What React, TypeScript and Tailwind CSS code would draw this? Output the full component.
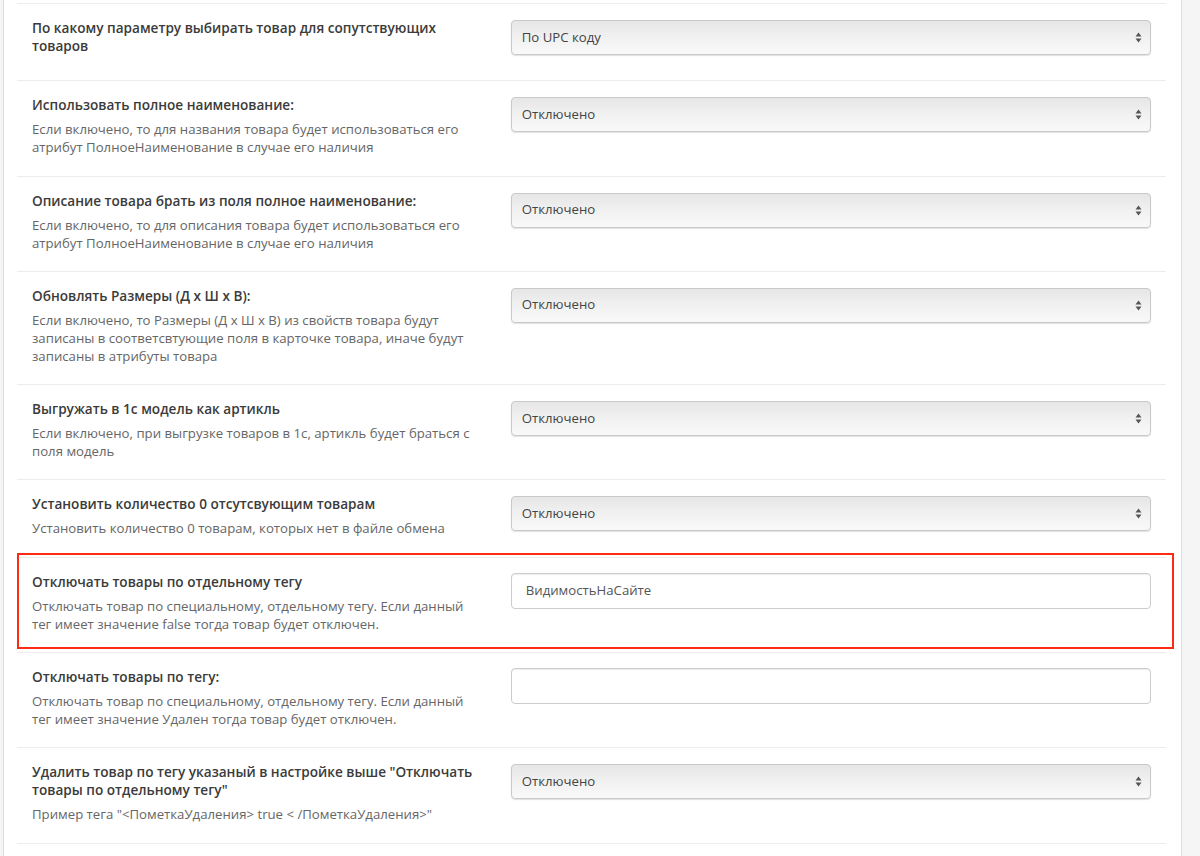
import React from "react";

type Setting = {
  id: string;
  label: string;
  help?: string[];
  kind: "select" | "input";
  value: string;
  marked?: boolean;
};

const settings: Setting[] = [
  {
    id: "related",
    label: "По какому параметру выбирать товар для сопутствующих товаров",
    kind: "select",
    value: "По UPC коду",
  },
  {
    id: "fullname",
    label: "Использовать полное наименование:",
    help: ["Если включено, то для названия товара будет использоваться его атрибут ПолноеНаименование в случае его наличия"],
    kind: "select",
    value: "Отключено",
  },
  {
    id: "description",
    label: "Описание товара брать из поля полное наименование:",
    help: ["Если включено, то для описания товара будет использоваться его атрибут ПолноеНаименование в случае его наличия"],
    kind: "select",
    value: "Отключено",
  },
  {
    id: "sizes",
    label: "Обновлять Размеры (Д х Ш х В):",
    help: ["Если включено, то Размеры (Д х Ш х В) из свойств товара будут записаны в соответсвтующие поля в карточке товара, иначе будут записаны в атрибуты товара"],
    kind: "select",
    value: "Отключено",
  },
  {
    id: "model",
    label: "Выгружать в 1с модель как артикль",
    help: ["Если включено, при выгрузке товаров в 1с, артикль будет браться с поля модель"],
    kind: "select",
    value: "Отключено",
  },
  {
    id: "zero",
    label: "Установить количество 0 отсутсвующим товарам",
    help: ["Установить количество 0 товарам, которых нет в файле обмена"],
    kind: "select",
    value: "Отключено",
  },
  {
    id: "tag",
    label: "Отключать товары по отдельному тегу",
    help: ["Отключать товар по специальному, отдельному тегу. Если данный тег имеет значение false тогда товар будет отключен."],
    kind: "input",
    value: "ВидимостьНаСайте",
    marked: true,
  },
  {
    id: "deleted",
    label: "Отключать товары по тегу:",
    help: ["Отключать товар по специальному, отдельному тегу. Если данный тег имеет значение Удален тогда товар будет отключен."],
    kind: "input",
    value: "",
  },
  {
    id: "remove",
    label: 'Удалить товар по тегу указаный в настройке выше "Отключать товары по отдельному тегу"',
    help: ['Пример тега "<ПометкаУдаления> true < /ПометкаУдаления>"'],
    kind: "select",
    value: "Отключено",
  },
];

const Arrows = () => (
  <svg width="7" height="11" viewBox="0 0 7 11" className="shrink-0">
    <path d="M3.5 0.5 L6.5 4.5 H0.5 Z" fill="#555" />
    <path d="M3.5 10.5 L6.5 6.5 H0.5 Z" fill="#555" />
  </svg>
);

const FakeSelect = ({ value }: { value: string }) => (
  <div className="mt-px flex h-[35px] items-center justify-between rounded-[4px] border border-[#c9c9c9] bg-linear-to-b from-[#e6e6e6] via-[#f1f1f1] to-[#f9f9f9] pl-[10px] pr-[8px] text-[13.2px] text-[#444] shadow-[0_1px_1px_rgba(0,0,0,0.12)]">
    <span>{value}</span>
    <Arrows />
  </div>
);

const TextInput = ({ value }: { value: string }) => (
  <div className="flex h-[36px] items-center rounded-[4px] border border-[#cccccc] bg-white px-[14px] text-[13.2px] text-[#555] shadow-[inset_0_1px_1px_rgba(0,0,0,0.075)]">
    {value}
  </div>
);

const SettingRow = ({ s }: { s: Setting }) => (
  <div className="relative flex border-t border-[#ececec] pt-[15px] pb-[19.3px]">
    {s.marked && (
      <div className="pointer-events-none absolute -top-[5px] left-0 -right-[8px] h-[96px] border-2 border-[#ff2a12]" />
    )}
    <div className="w-5/12 px-[15px]">
      <div className="mb-[6px] text-[13.6px] font-semibold leading-[18px] text-[#3b3b3b]">{s.label}</div>
      {s.help?.map((h) => (
        <div key={h} className="text-[13.2px] leading-[18px] text-[#666]">
          {h}
        </div>
      ))}
    </div>
    <div className="w-7/12 px-[15px]">
      {s.kind === "select" ? <FakeSelect value={s.value} /> : <TextInput value={s.value} />}
    </div>
  </div>
);

export default function App() {
  return (
    <div
      className="flex min-h-[856px] bg-[#f5f5f5]"
      style={{ fontFamily: '"Open Sans", "Noto Sans", sans-serif' }}
    >
      <div className="ml-[3px] w-[1179px] border-x border-[#dddddd] bg-white pl-[13px] pr-[15px] pt-[3px]">
        <div className="border-b border-[#ececec]">
          {settings.map((s) => (
            <SettingRow key={s.id} s={s} />
          ))}
        </div>
      </div>
    </div>
  );
}
